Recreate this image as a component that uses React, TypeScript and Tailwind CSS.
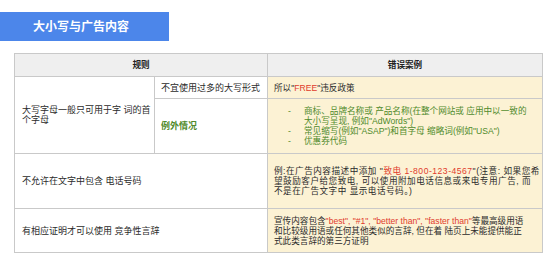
import React from 'react';

const font = { fontFamily: '"Liberation Sans", "Noto Sans CJK SC", sans-serif' };

const Red = ({ children }: { children: React.ReactNode }) => (
  <span className="text-[#e03b2c]">{children}</span>
);

const Bullet = ({ lines }: { lines: string[] }) => (
  <div className="flex">
    <span className="w-[30px] pl-[14px] shrink-0">-</span>
    <span className="flex flex-col">
      {lines.map((l) => (
        <span key={l} className="whitespace-nowrap">{l}</span>
      ))}
    </span>
  </div>
);

const App = () => {
  const cell = 'border border-[#c9c9c9] align-middle';
  return (
    <div className="w-[554px] h-[259px] bg-white text-[#2b2b2b] overflow-hidden" style={font}>
      <div className="mt-[12px] w-[169px] h-[29px] bg-[#4c86ea] flex items-center pl-[33px]">
        <span className="text-white font-bold text-[12px] leading-none">大小写与广告内容</span>
      </div>
      <table className="ml-[14px] mt-[12px] border-collapse table-fixed text-[8.6px] leading-[10px]" style={{ width: 528 }}>
        <colgroup>
          <col className="w-[140px]" />
          <col className="w-[113px]" />
          <col className="w-[275px]" />
        </colgroup>
        <tbody>
          <tr className="h-[23px] bg-[#efefef] font-bold text-[#222]">
            <td colSpan={2} className={`${cell} text-center`}>规则</td>
            <td className={`${cell} text-center`}>错误案例</td>
          </tr>
          <tr className="h-[22px]">
            <td rowSpan={2} className={`${cell} px-[7px] text-[9px]`}>
              <div className="flex flex-col">
                <span className="whitespace-nowrap">大写字母一般只可用于字 词的首</span>
                <span className="whitespace-nowrap">个字母</span>
              </div>
            </td>
            <td className={`${cell} px-[6px] text-[9px]`}>不宜使用过多的大写形式</td>
            <td className={`${cell} px-[6px] bg-[#fcf2d4]`}>
              所以"<Red>FREE</Red>"违反政策
            </td>
          </tr>
          <tr className="h-[55px]">
            <td className={`${cell} px-[6px] text-[9px] text-[#4f8a2b] font-bold`}>例外情况</td>
            <td className={`${cell} px-[6px] bg-[#fcf2d4] text-[#4f8a2b]`}>
              <div className="flex flex-col">
                <Bullet lines={['商标、品牌名称或 产品名称(在整个网站或 应用中以一致的', '大小写呈现, 例如"AdWords")']} />
                <Bullet lines={['常见缩写(例如"ASAP")和首字母 缩略词(例如"USA")']} />
                <Bullet lines={['优惠券代码']} />
              </div>
            </td>
          </tr>
          <tr className="h-[55px]">
            <td colSpan={2} className={`${cell} px-[7px] text-[9px]`}>不允许在文字中包含 电话号码</td>
            <td className={`${cell} px-[6px] bg-[#fcf2d4] tracking-[0.5px]`}>
              <div className="flex flex-col">
                <span className="whitespace-nowrap">例:在广告内容描述中添加 "<Red>致电 1-800-123-4567</Red>"(注意: 如果您希</span>
                <span className="whitespace-nowrap">望鼓励客户给您致电, 可以使用附加电话信息或来电专用广告, 而</span>
                <span className="whitespace-nowrap">不是在广告文字中 显示电话号码。)</span>
              </div>
            </td>
          </tr>
          <tr className="h-[44px]">
            <td colSpan={2} className={`${cell} px-[7px] text-[9px]`}>有相应证明才可以使用 竞争性言辞</td>
            <td className={`${cell} px-[6px] bg-[#fcf2d4]`}>
              <div className="flex flex-col">
                <span className="whitespace-nowrap">宣传内容包含<Red>"best", "#1", "better than", "faster than"</Red>等最高级用语</span>
                <span className="whitespace-nowrap">和比较级用语或任何其他类似的言辞, 但在着 陆页上未能提供能正</span>
                <span className="whitespace-nowrap">式此类言辞的第三方证明</span>
              </div>
            </td>
          </tr>
        </tbody>
      </table>
    </div>
  );
};

export default App;
